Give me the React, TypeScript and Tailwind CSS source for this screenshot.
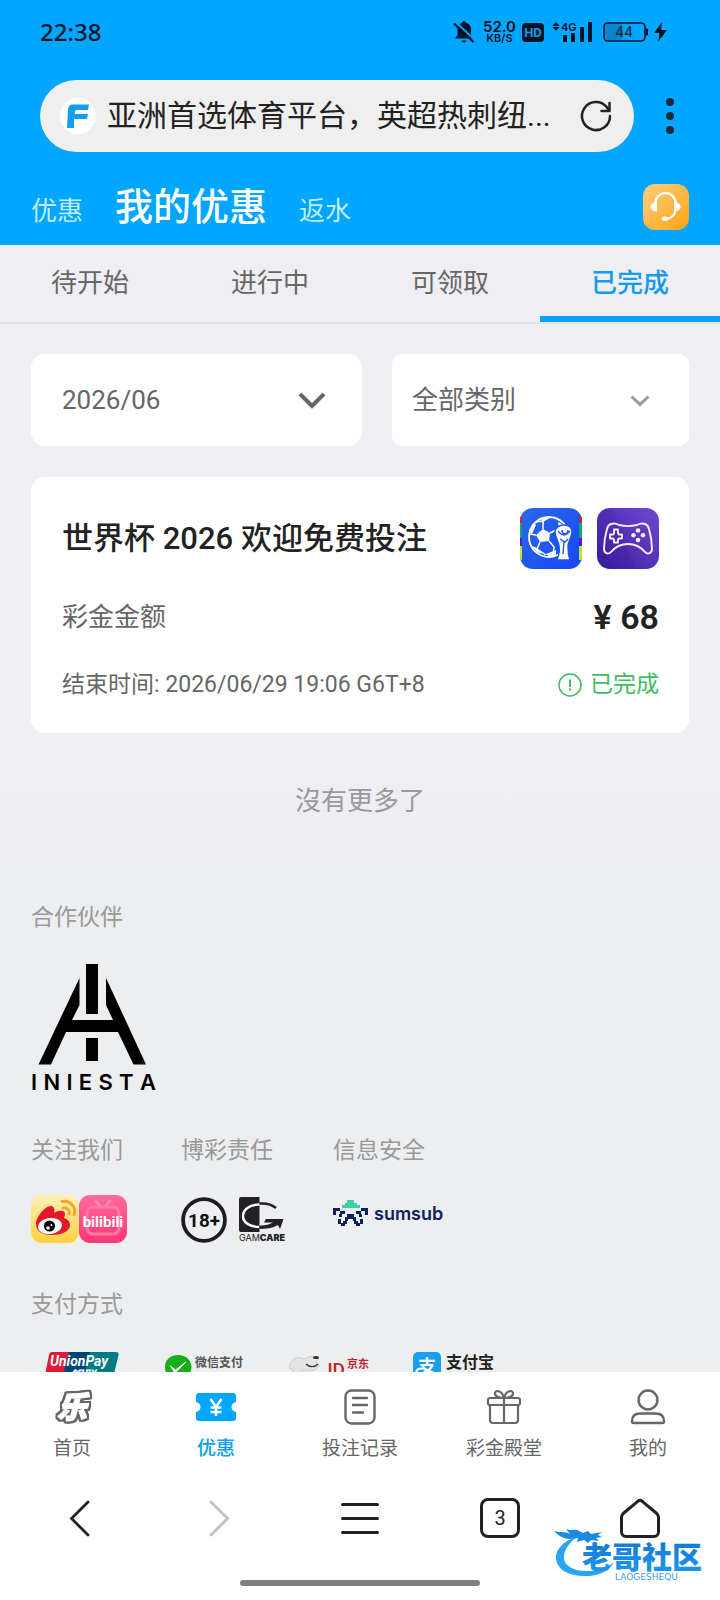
import { useState } from "react";

const tabs = ["待开始", "进行中", "可领取", "已完成"];

function StatusBar() {
  return (
    <div className="flex h-16 items-center justify-between pl-10 pr-[52px] text-[#03142a]">
      <span className="font-['Noto_Sans',sans-serif] text-2xl font-medium">22:38</span>
      <div className="flex items-center">
        <svg width="22" height="24" viewBox="0 0 22 24" fill="currentColor">
          <path d="M11 1c1 0 1.600.6 1.600 1.500C16 3.300 18 6 18 9.500V15l2.500 3.500H2L4.500 15V9.500C4.500 6 6.500 3.300 9.400 2.500 9.400 1.600 10 1 11 1zM8.500 20.500h5c-.4 1.400-1.300 2-2.500 2s-2.100-.6-2.500-2z" />
          <path d="M2 1.500 22 20" stroke="#00a6ff" strokeWidth="2" />
          <path d="M1 3.500 20.500 22" stroke="currentColor" strokeWidth="2.200" />
        </svg>
        <div className="ml-2 flex flex-col items-center font-['Inter',sans-serif] font-semibold">
          <span className="text-[15px] leading-[13px]">52.0</span>
          <span className="text-[11px] leading-[11px]">KB/S</span>
        </div>
        <svg className="ml-[6px]" width="22" height="19" viewBox="0 0 22 19">
          <rect width="22" height="19" rx="4" fill="currentColor" />
          <text x="11" y="14" fontSize="13" fontWeight="700" fontFamily="Roboto" fill="#1798e0" textAnchor="middle">HD</text>
        </svg>
        <svg className="ml-2" width="42" height="22" viewBox="0 0 42 22" fill="currentColor">
          <path d="m4 1 3.500 4h-7zM4 10 7.500 6h-7z" />
          <text x="9" y="9.500" fontSize="11" fontWeight="600" fontFamily="Inter">4G</text>
          <path d="M11 14h4v7h-4zM19 12h4v9h-4zM28 6h4v15h-4zM36 1h4v20h-4z" />
        </svg>
        <svg className="ml-2" width="66" height="22" viewBox="0 0 66 22">
          <rect x="2" y="2" width="41" height="18" rx="4" fill="none" stroke="currentColor" strokeWidth="1.600" />
          <rect x="3" y="3" width="18" height="16" rx="3" fill="#0b86cc" />
          <path d="M45 7.500v7" stroke="currentColor" strokeWidth="2" />
          <text x="22" y="16" fontSize="14" fontFamily="Inter" fill="currentColor" textAnchor="middle">44</text>
          <path d="m60 1-8 11h5.500L56 21l9-12h-6z" fill="currentColor" />
        </svg>
      </div>
    </div>
  );
}

function AddressBar() {
  return (
    <div className="flex items-center py-4 pl-10 pr-[14px]">
      <div className="flex h-[72px] min-w-0 flex-1 items-center rounded-full bg-[#efefef] px-5">
        <svg className="shrink-0" width="36" height="36" viewBox="0 0 36 36">
          <circle cx="18" cy="18" r="18" fill="#fff" />
          <path d="M12.500 6.500H29l-1 5.500H15.500l-1 4H28l-1 5H14v9H7l1-18c.3-3.500 1.800-5.500 4.500-5.500z" fill="#149dee" />
        </svg>
        <input
          aria-label="地址栏"
          className="ml-[11px] min-w-0 flex-1 truncate bg-transparent text-[30px] leading-10 text-[#222] outline-none"
          defaultValue="亚洲首选体育平台，英超热刺纽..."
        />
        <button aria-label="刷新" className="shrink-0">
          <svg width="36" height="36" viewBox="0 0 36 36" fill="none" stroke="#222" strokeWidth="2.500" strokeLinecap="round" strokeLinejoin="round">
            <path d="M32 18a14 14 0 1 1-3.500-9.200L31 12.500" />
            <path d="M31.500 5v8h-8" />
          </svg>
        </button>
      </div>
      <button aria-label="更多" className="flex w-[72px] shrink-0 flex-col items-center gap-[6px]">
        <span className="size-2 rounded-full bg-[#1b2a36]" />
        <span className="size-2 rounded-full bg-[#1b2a36]" />
        <span className="size-2 rounded-full bg-[#1b2a36]" />
      </button>
    </div>
  );
}

function SectionNav() {
  return (
    <nav className="flex h-[77px] items-center gap-8 px-[31px]">
      <div className="flex items-baseline gap-8">
        <a href="#promo" className="text-[26px] leading-10 text-[#bfecff]">优惠</a>
        <a href="#mine" className="text-[38px] font-medium leading-[52px] text-white">我的优惠</a>
        <a href="#rebate" className="text-[26px] leading-10 text-[#bfecff]">返水</a>
      </div>
      <button aria-label="客服" className="ml-auto">
        <svg width="46" height="46" viewBox="0 0 46 46">
          <defs>
            <linearGradient id="service" x1="0" y1="0" x2="1" y2="1">
              <stop offset="0" stopColor="#ffcf80" />
              <stop offset="1" stopColor="#ffa412" />
            </linearGradient>
          </defs>
          <rect width="46" height="46" rx="12" fill="url(#service)" />
          <path d="M12.500 22v-3a10 10 0 0 1 20 0v5c0 6-3.500 10-9 11" fill="none" stroke="#fff" strokeWidth="2.200" />
          <path d="M14 18v9.500c-4 0-6.500-2-6.500-4.700s2.500-4.800 6.500-4.800zM31 18v9.500c4 0 6.500-2 6.500-4.700S35 18 31 18z" fill="#fff" />
          <ellipse cx="22" cy="34.800" rx="3.300" ry="2.200" fill="#fff" />
        </svg>
      </button>
    </nav>
  );
}

function WorldCupIcon() {
  return (
    <svg width="62" height="61" viewBox="0 0 62 61">
      <defs>
        <linearGradient id="cup" x1="0" y1="0" x2="1" y2="1">
          <stop offset="0" stopColor="#2a6ae8" />
          <stop offset="1" stopColor="#1646f5" />
        </linearGradient>
        <clipPath id="cupClip"><rect width="62" height="61" rx="13" /></clipPath>
      </defs>
      <g clipPath="url(#cupClip)">
        <rect width="62" height="61" fill="url(#cup)" />
        <path d="M0 8h2v7H0zM59 8h3v7h-3z" fill="#d01f3c" />
        <path d="M0 15h2v15H0zM59 15h3v15h-3z" fill="#10a878" />
        <path d="M0 30h2v8H0zM59 30h3v8h-3z" fill="#5a12e0" />
        <path d="M0 38h2v14H0zM59 38h3v14h-3z" fill="#b6ee22" />
        <circle cx="29" cy="29" r="20" fill="none" stroke="#fff" strokeWidth="1.800" />
        <path d="m23 21 7 4-1 8-9 1-4-7z" fill="#fff" />
        <path d="M23 21V13l7-4M30 25l8-4M29 33l5 6-1 9M20 34l-3 7M16 27l-7-1M17 41l9 6M23 13l-7 1" fill="none" stroke="#fff" strokeWidth="1.500" />
        <path d="m19 10 9-1-5 5zM9 23l4-8 3 2-4 9zM12 38l5 2 5 6c-4-1-8-4-10-8zM26 46l10-4v5c-3 2-8 2-10-1zM38 14c5 2 8 5 9 9l-8-3z" fill="#fff" />
        <path d="M44 17c5 0 8 3 8 7 0 5-4 9-4 14 0 5 0 8 2 14H37c2-5 3-9 2-14-1-6-4-9-4-14 0-4 4-7 9-7z" fill="#fff" stroke="#1f55ee" strokeWidth="1.500" />
        <path d="M38 23c2 2 3 4 6 4s4-2 6-4M40 31l5 3 3-3M44 34l-1 12M42 22c0 5 6 5 6 0" fill="none" stroke="#1f55ee" strokeWidth="1.400" />
      </g>
    </svg>
  );
}

function GamepadIcon() {
  return (
    <svg width="62" height="61" viewBox="0 0 62 61">
      <defs>
        <linearGradient id="pad" x1="0" y1="1" x2="1" y2="0">
          <stop offset="0" stopColor="#3b1ca0" />
          <stop offset="1" stopColor="#6d49cf" />
        </linearGradient>
      </defs>
      <rect width="62" height="61" rx="13" fill="url(#pad)" />
      <path d="M0 13C0 5 5 0 13 0h3l22 61H13C5 61 0 56 0 48z" fill="#2c128c" opacity=".12" />
      <g fill="none" stroke="#f3edff" strokeWidth="1.900" strokeLinejoin="round">
        <path d="M22 17c6 1.500 12 1.500 18 0 6-3 11-1 12 4 2 7 3 14 3 20 0 4-4 6-7 3-5-6-10-8-17-8s-12 2-17 8c-3 3-7 1-7-3 0-6 1-13 3-20 1-5 6-7 12-4z" />
        <path d="M17 21.500h4v4l1 1h3v4h-3l-1 1v3h-4v-3l-1-1h-3v-4h3l1-1z" />
      </g>
      <g fill="#f3edff">
        <circle cx="41" cy="22.500" r="2.300" />
        <circle cx="41" cy="32" r="2.300" />
        <circle cx="36.500" cy="27.300" r="2.300" />
        <circle cx="46" cy="27.300" r="2.300" />
      </g>
    </svg>
  );
}

function PromoCard() {
  return (
    <article className="rounded-[14px] bg-white pb-[33px] pl-[31px] pr-[30px] pt-[31px]">
      <div className="flex items-center justify-between">
        <h2 className="text-[31px] font-medium leading-10 text-[#222]">世界杯 2026 欢迎免费投注</h2>
        <div className="flex gap-[15px]">
          <WorldCupIcon />
          <GamepadIcon />
        </div>
      </div>
      <div className="mt-7 flex items-center justify-between leading-10">
        <span className="text-[26px] text-[#666]">彩金金额</span>
        <span className="text-[34px] font-semibold text-[#222]">¥ 68</span>
      </div>
      <div className="mt-[33px] flex items-center justify-between text-[23px] leading-[30px]">
        <span className="text-[#666]">结束时间: 2026/06/29 19:06 G6T+8</span>
        <span className="flex items-center gap-2 text-[#3dbd60]">
          <svg width="24" height="24" viewBox="0 0 24 24" fill="none" stroke="currentColor">
            <circle cx="12" cy="12" r="11" strokeWidth="1.500" />
            <path d="M12 6.500v7.500M12 15.500v2" strokeWidth="2" />
          </svg>
          已完成
        </span>
      </div>
    </article>
  );
}

function IniestaLogo() {
  return (
    <div className="mt-[30px] w-[125px]">
      <svg width="125" height="101" viewBox="0 0 125 101">
        <path d="M55 0h12v50H55zM55 74h12v23H55zM48.500 14v27L41 56h41l-7-15V14l40 86.500h-12.500L87 68H35l-15 32.500H7.500z" fill="#000" />
      </svg>
      <div className="flex justify-between font-[Inter,sans-serif] text-[22px] font-semibold leading-[34px] text-black">
        {"INIESTA".split("").map((letter, i) => (
          <span key={i}>{letter}</span>
        ))}
      </div>
    </div>
  );
}

function WeiboIcon() {
  return (
    <svg width="48" height="48" viewBox="0 0 48 48">
      <defs>
        <linearGradient id="weibo" x1="0" y1="0" x2="0" y2="1">
          <stop offset="0" stopColor="#fff0b8" />
          <stop offset="1" stopColor="#ffd23c" />
        </linearGradient>
      </defs>
      <rect width="48" height="48" rx="11" fill="url(#weibo)" />
      <path d="M5 29C5 22 14 11 20 11c3 0 4 3 3 7 5-3 11-3 11 1 0 2-1 3-1 4 3 1 6 3 6 7 0 6-8 10-18 10S5 36 5 29z" fill="#e6162d" />
      <ellipse cx="19" cy="31" rx="12" ry="8" fill="#fff" transform="rotate(-8 19 31)" />
      <circle cx="18.500" cy="31" r="5.600" fill="#000" />
      <circle cx="17" cy="33" r="1.800" fill="#fff" />
      <circle cx="20.500" cy="30" r="1" fill="#fff" />
      <path d="M31 6.500C39 5 46 12 43 20M32 13c4-1 7 2 6 6" fill="none" stroke="#f7a32b" strokeWidth="2.800" strokeLinecap="round" />
    </svg>
  );
}

function BilibiliIcon() {
  return (
    <svg width="48" height="48" viewBox="0 0 48 48">
      <defs>
        <linearGradient id="bili" x1="0" y1="0" x2="0" y2="1">
          <stop offset="0" stopColor="#ff6b9d" />
          <stop offset="1" stopColor="#ff3674" />
        </linearGradient>
      </defs>
      <rect width="48" height="48" rx="11" fill="url(#bili)" />
      <path d="m17 6 4 5M31 6l-4 5" stroke="#ff86ae" strokeWidth="3" strokeLinecap="round" />
      <rect x="8" y="12" width="32" height="27" rx="6" fill="none" stroke="#ff7ba6" strokeWidth="3" />
      <text x="24" y="32" fontSize="19" fontWeight="700" fontFamily="Liberation Sans Narrow, Roboto, sans-serif" fill="#fff" textAnchor="middle" className="text-[15px]">bilibili</text>
    </svg>
  );
}

function AdultIcon() {
  return (
    <svg width="46" height="46" viewBox="0 0 44 44">
      <circle cx="22" cy="22" r="20" fill="none" stroke="#1d1d20" strokeWidth="3.600" />
      <text x="22" y="28.500" fontSize="18" fontWeight="700" fontFamily="Roboto" fill="#111" textAnchor="middle">18+</text>
    </svg>
  );
}

function GamcareIcon() {
  return (
    <svg width="46" height="45" viewBox="0 0 46 45">
      <path d="M2 0h18.500v35H2a2 2 0 0 1-2-2V2a2 2 0 0 1 2-2z" fill="#222226" />
      <path d="M20.500 7.500C10 7.500 4 13 4 19s6 11 16.500 11" fill="none" stroke="#fff" strokeWidth="2.500" />
      <path d="M20.500 6.500C27 6 33 7.500 37 11M20.500 30c7 0 13-2 16-5" fill="none" stroke="#222226" strokeWidth="2.500" />
      <path d="M27 22h17.500L41 32l-2-4c-5 3-12 4-18.500 4v-3c6 0 11-1 14-3.500h-9.500z" fill="#222226" />
      <text x="0" y="44" fontSize="9" fontFamily="Inter" fill="#222226">GAM<tspan fontWeight="900">CARE</tspan></text>
    </svg>
  );
}

function SumsubLogo() {
  return (
    <div className="flex items-center gap-[6px] pt-[3px]">
      <svg width="35" height="28" viewBox="0 0 35 28">
        <path d="M14 0h7v3h3v2h3v3H9V5h3V3h2z" fill="#3ecfab" />
        <path d="M0 8h7v3H3v4H0zM28 8h7v7h-3v-4h-4zM7 11h5v3H9v3H6v-3h1zM23 11h5v3h1v3h-3v-3h-3zM14 14h7v3h2v4h-3v-2h-5v2h-3v-4h2zM5 19h3v4h4v3H8v-2H5zM27 19h3v5h-3v2h-4v-3h4zM10 21h4v3h-4zM21 21h4v3h-4z" fill="#10205e" />
      </svg>
      <span className="font-[Inter,sans-serif] text-lg font-semibold leading-7 text-[#10205e]">sumsub</span>
    </div>
  );
}

function PaymentLogos() {
  return (
    <div className="mt-[31px] flex gap-[42px] pl-[10px]">
      <svg className="shrink-0" width="82" height="46" viewBox="0 0 82 46">
        <path d="M11 0h18L17 46H3c-2 0-3-1-3-3L8 3c.5-2 1.500-3 3-3z" fill="#e21836" />
        <path d="M28 0h22L38 46H16z" fill="#00447c" />
        <path d="M49 0h26c2 0 3 1 2.500 3L68 43c-.5 2-1.500 3-3 3H38z" fill="#007b84" />
        <text x="9" y="14" fontSize="14" fontWeight="700" fontStyle="italic" fontFamily="Roboto" fill="#fff">UnionPay</text>
        <text x="29" y="28" fontSize="13" fontWeight="700" fontStyle="italic" fontFamily="Noto Sans CJK SC" fill="#fff">银联</text>
      </svg>
      <svg className="shrink-0" width="82" height="46" viewBox="0 0 82 46">
        <path d="M13 3c8 0 13.500 5 13.500 12S21 27 13 27c-2 0-4-.3-6-1l-5 3 1.500-5C1 21.500 0 19 0 15 0 8 5 3 13 3z" fill="#1aad19" />
        <path d="m5.500 14 5 4L21 10l-11 11z" fill="#fff" stroke="#fff" />
        <text x="30" y="15" fontSize="12" fontWeight="700" fontFamily="Noto Sans CJK SC" fill="#555">微信支付</text>
        <text x="30" y="27" fontSize="8" fontWeight="600" fontFamily="Inter" fill="#555">WeChat Pay</text>
      </svg>
      <svg className="shrink-0" width="82" height="46" viewBox="0 0 82 46">
        <path d="M1 12c2-6 9-8 14-5l4-2c4-1 9-1 11 1l-3 4 3 3c-2 5-8 7-13 5-4 0-7 3-9 8-3-2-5-5-4-9-2 0-3 0-4-1z" fill="#e4e4e4" stroke="#bbb" strokeWidth=".6" />
        <ellipse cx="27" cy="5.500" rx="3" ry="1.500" fill="#333" />
        <path d="M17 12c4 4 9 3 12 0" fill="none" stroke="#333" strokeWidth="1.300" />
        <text x="33" y="24" fontSize="19" fontWeight="500" fontFamily="Roboto" fill="#c2242c">JD</text>
        <text x="58" y="16" fontSize="11" fontWeight="700" fontFamily="Noto Sans CJK SC" fill="#c2242c">京东</text>
        <text x="58" y="27" fontSize="8" fontWeight="700" fontFamily="Inter" fill="#c2242c">.COM</text>
      </svg>
      <svg className="shrink-0" width="82" height="46" viewBox="0 0 82 46">
        <rect width="28" height="28" rx="5" fill="#18a0e8" />
        <text x="14" y="21" fontSize="18" fontWeight="700" fontFamily="Noto Sans CJK SC" fill="#fff" textAnchor="middle">支</text>
        <path d="M3 20c2-5 8-5 22 3" fill="none" stroke="#fff" strokeWidth="2" />
        <text x="33" y="16" fontSize="16" fontWeight="700" fontFamily="Noto Sans CJK SC" fill="#222">支付宝</text>
        <text x="33" y="28" fontSize="8" fontWeight="600" fontFamily="Inter" fill="#222">ALIPAY</text>
      </svg>
    </div>
  );
}

function Footer() {
  return (
    <footer className="mt-[81px] text-[23px] leading-8 text-[#999]">
      <h3>合作伙伴</h3>
      <IniestaLogo />
      <div className="mt-9 flex">
        <section className="w-[150px]">
          <h3>关注我们</h3>
          <div className="mt-7 flex">
            <WeiboIcon />
            <BilibiliIcon />
          </div>
        </section>
        <section className="w-[152px]">
          <h3>博彩责任</h3>
          <div className="mt-[30px] flex gap-3">
            <AdultIcon />
            <GamcareIcon />
          </div>
        </section>
        <section>
          <h3>信息安全</h3>
          <div className="mt-[30px]">
            <SumsubLogo />
          </div>
        </section>
      </div>
      <h3 className="mt-[46px]">支付方式</h3>
      <PaymentLogos />
    </footer>
  );
}

const navItems = [
  {
    label: "首页",
    icon: (
      <svg
        className="drop-shadow-[2px_0_0_#666] [filter:drop-shadow(2px_0_0_#666)_drop-shadow(-2px_0_0_#666)_drop-shadow(0_2px_0_#666)_drop-shadow(0_-2px_0_#666)]"
        width="44"
        height="40"
        viewBox="0 0 44 40"
      >
        <text x="22" y="31" fontSize="30" fontWeight="900" fontStyle="italic" fontFamily="Noto Sans CJK SC" textAnchor="middle" fill="#fff" stroke="#fff" strokeWidth="1.500" strokeLinejoin="round">乐</text>
      </svg>
    ),
  },
  {
    label: "优惠",
    active: true,
    icon: (
      <svg width="40" height="40" viewBox="0 0 40 40">
        <path d="M3 6h34c2 0 3 1 3 3v6c-6 1-6 9 0 10v6c0 2-1 3-3 3H3c-2 0-3-1-3-3v-6c6-1 6-9 0-10V9c0-2 1-3 3-3z" fill="#00a6ff" />
        <path d="m14.500 12 5.500 8 5.500-8M20 20v9M14.500 20.500h11M14.500 25h11" fill="none" stroke="#fff" strokeWidth="2.400" />
      </svg>
    ),
  },
  {
    label: "投注记录",
    icon: (
      <svg width="40" height="40" viewBox="0 0 40 40" fill="none" stroke="#666" strokeWidth="2.400" strokeLinecap="round">
        <rect x="5.500" y="3.500" width="29" height="33" rx="6" />
        <path d="M13 11h14M13 18h14M13 25.500h10" />
      </svg>
    ),
  },
  {
    label: "彩金殿堂",
    icon: (
      <svg width="40" height="40" viewBox="0 0 40 40" fill="none" stroke="#666" strokeWidth="2.200" strokeLinejoin="round">
        <rect x="4" y="11" width="32" height="7" rx="2" />
        <path d="M6 18v15a3 3 0 0 0 3 3h22a3 3 0 0 0 3-3V18M20 11v25M20 11c-3 0-9-1-9-4.500 0-4 7-3.500 9 4.500 2-8 9-8.500 9-4.500C29 10 23 11 20 11z" />
      </svg>
    ),
  },
  {
    label: "我的",
    icon: (
      <svg width="40" height="40" viewBox="0 0 40 40" fill="none" stroke="#666" strokeWidth="2.400" strokeLinejoin="round">
        <circle cx="20" cy="13" r="9.500" />
        <path d="M4 34.500C4 29 7 26.500 12 26.500h16c5 0 8 2.500 8 8 0 .8-.5 1.500-1.500 1.500h-29C4.500 36 4 35.300 4 34.500z" />
      </svg>
    ),
  },
];

function AppNav() {
  return (
    <nav className="grid grid-cols-5 pt-[15px]">
      {navItems.map((item) => (
        <a key={item.label} href="#nav" className="flex flex-col items-center">
          {item.icon}
          <span className={`mt-2 text-[19px] leading-7 ${item.active ? "font-medium text-[#0a9ff0]" : "text-[#666]"}`}>
            {item.label}
          </span>
        </a>
      ))}
    </nav>
  );
}

function BrowserNav() {
  return (
    <div className="grid grid-cols-5 px-[10px] pt-[35px]">
      <button aria-label="后退" className="flex justify-center">
        <svg width="40" height="40" viewBox="0 0 40 40" fill="none" stroke="#222" strokeWidth="2.800" strokeLinecap="round">
          <path d="M28 4 11.500 20.500 28 37" />
        </svg>
      </button>
      <button aria-label="前进" className="flex justify-center">
        <svg width="40" height="40" viewBox="0 0 40 40" fill="none" stroke="#c0c0c0" strokeWidth="2.800" strokeLinecap="round">
          <path d="m11 4 16.500 16.500L11 37" />
        </svg>
      </button>
      <button aria-label="菜单" className="flex justify-center">
        <svg width="40" height="40" viewBox="0 0 40 40" stroke="#222" strokeWidth="3" strokeLinecap="round">
          <path d="M2.500 6.500h35M2.500 20.500h35M2.500 34.500h35" />
        </svg>
      </button>
      <button aria-label="标签页" className="flex justify-center">
        <span className="flex size-10 items-center justify-center rounded-lg border-3 border-[#222] text-xl text-[#222]">3</span>
      </button>
      <button aria-label="主页" className="flex justify-center">
        <svg width="40" height="40" viewBox="0 0 40 40" fill="none" stroke="#222" strokeWidth="3" strokeLinejoin="round">
          <path d="M18 3.200 3.800 15c-1.500 1.200-2.300 2.200-2.300 4v15a4.500 4.500 0 0 0 4.500 4.500h28a4.500 4.500 0 0 0 4.500-4.500V19c0-1.800-.8-2.800-2.300-4L22 3.200c-1.400-1.200-2.600-1.200-4 0z" />
        </svg>
      </button>
    </div>
  );
}

function Watermark() {
  return (
    <svg className="absolute bottom-[18px] right-[10px]" width="156" height="54" viewBox="0 0 156 54">
      <defs>
        <linearGradient id="mark" x1="0" y1="0" x2="0" y2="1">
          <stop offset="0" stopColor="#1170d0" />
          <stop offset="1" stopColor="#1c9cf2" />
        </linearGradient>
      </defs>
      <path d="M23 9C9 13 1 22 2 31c2 13 17 18 33 17 12-1 21-6 25-14-6 6-14 9-25 9-14 1-24-5-25-12-1-8 5-16 13-22z" fill="#2aa5f3" />
      <path d="M0 3c6 2 11 0 16 3l-4-5c5 2 8 0 11 1l6 3 5-2 3 3 11-2-4 3 4 2-6 1 3 3-8-1-3 3-4-3-7 2 1-4-8 1C11 11 4 8 0 3z" fill="#1b8be0" />
      <text x="28" y="40" fontSize="30" fontWeight="900" fontFamily="Noto Sans CJK SC" fill="url(#mark)">老哥社区</text>
      <text x="61" y="52" fontSize="9" fontFamily="DejaVu Sans" fill="#3aa0ea">LAOGESHEQU</text>
    </svg>
  );
}

export default function App() {
  const [active, setActive] = useState("已完成");

  return (
    <div className="flex h-screen flex-col bg-[#efeef3] font-[Roboto,'Noto_Sans_CJK_SC',sans-serif]">
      <header className="shrink-0 bg-[#00a6ff]">
        <StatusBar />
        <AddressBar />
        <SectionNav />
      </header>

      <div className="grid shrink-0 grid-cols-4 border-b-2 border-[#e2e2e6]">
        {tabs.map((tab) => (
          <button
            key={tab}
            onClick={() => setActive(tab)}
            className={`h-[77px] border-b-6 pt-[5px] text-[26px] leading-10 ${
              active === tab
                ? "border-[#0aa2fa] font-medium text-[#149bee]"
                : "border-transparent text-[#666]"
            }`}
          >
            {tab}
          </button>
        ))}
      </div>

      <main className="min-h-0 flex-1 overflow-y-auto bg-linear-to-b from-[#efeef3] from-45% to-[#eceef0] to-55% px-[31px] pt-[30px] [scrollbar-width:none]">
        <div className="grid grid-cols-[331fr_297fr] gap-[30px] text-[26px] text-[#666]">
          <div className="relative">
            <select aria-label="月份" className="h-[92px] w-full appearance-none rounded-[14px] bg-white px-[31px]">
              <option>2026/06</option>
            </select>
            <svg className="pointer-events-none absolute right-9 top-9" width="28" height="20" viewBox="0 0 28 20" fill="none" stroke="#666" strokeWidth="4">
              <path d="m2 4 12 12L26 4" />
            </svg>
          </div>
          <div className="relative">
            <select aria-label="类别" className="h-[92px] w-full appearance-none rounded-[10px] bg-white px-5">
              <option>全部类别</option>
            </select>
            <svg className="pointer-events-none absolute right-[39px] top-10" width="20" height="14" viewBox="0 0 20 14" fill="none" stroke="#999" strokeWidth="3">
              <path d="m1.500 2.500 8.500 8 8.500-8" />
            </svg>
          </div>
        </div>
        <div className="mt-[31px]">
          <PromoCard />
        </div>
        <p className="mt-12 text-center text-[26px] leading-10 text-[#999]">沒有更多了</p>
        <Footer />
      </main>

      <div className="relative shrink-0 bg-white pb-[14px]">
        <AppNav />
        <BrowserNav />
        <div className="mx-auto mt-[42px] h-[6px] w-1/3 rounded-full bg-[#808080]" />
        <Watermark />
      </div>
    </div>
  );
}
